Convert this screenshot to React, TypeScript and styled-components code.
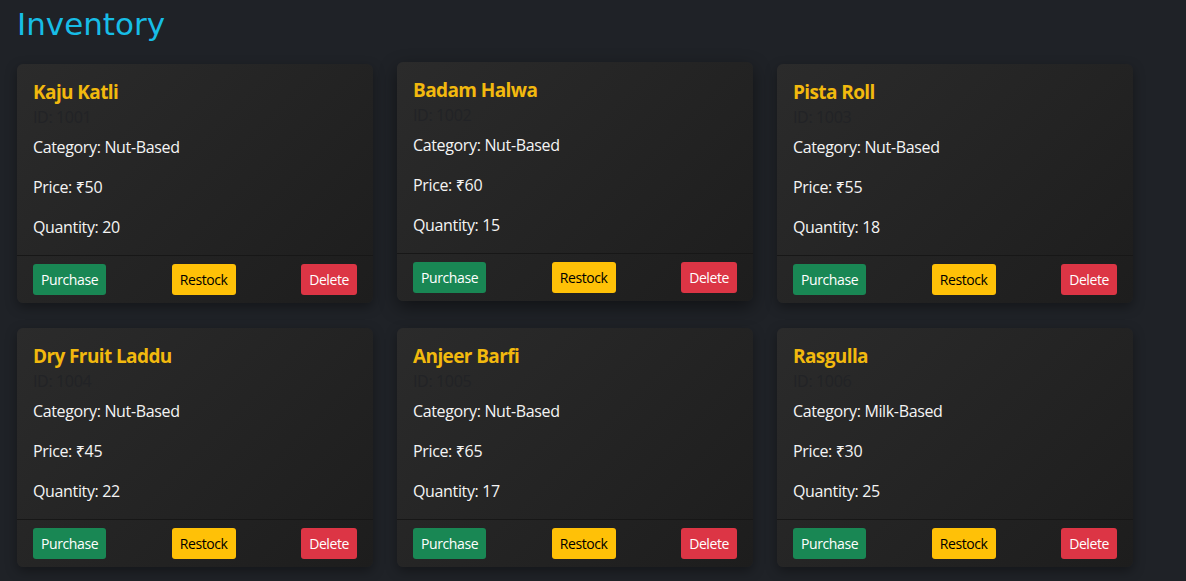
import React from "react";
import styled, { createGlobalStyle } from "styled-components";

const GlobalStyle = createGlobalStyle`
  html, body { margin: 0; padding: 0; }
  body {
    background: #1f2227;
    font-family: "Open Sans", "Noto Sans", sans-serif;
    color: #f1f1f1;
  }
`;

const Page = styled.div`
  padding: 0 53px 16px 17px;
  min-height: 581px;
  box-sizing: border-box;
`;

const Heading = styled.h2`
  margin: 0 0 20px;
  padding-top: 4px;
  font-family: "Comic Sans MS", "DejaVu Sans", sans-serif;
  font-weight: 400;
  font-size: 31px;
  line-height: 40px;
  color: #17bde6;
`;

const Grid = styled.div`
  display: grid;
  grid-template-columns: repeat(3, 356px);
  column-gap: 24px;
  row-gap: 25px;
`;

const Card = styled.div<{ $raised?: boolean }>`
  display: flex;
  flex-direction: column;
  border-radius: 6px;
  background: linear-gradient(135deg, #2b2b2b 0%, #1d1d1d 100%);
  box-shadow: ${(p) =>
    p.$raised ? "0 6px 18px rgba(0,0,0,0.45)" : "0 4px 12px rgba(0,0,0,0.35)"};
  transform: ${(p) => (p.$raised ? "translateY(-2px)" : "none")};
  overflow: hidden;
`;

const Body = styled.div`
  padding: 16px;
`;

const Title = styled.h5`
  margin: 0 0 8px;
  font-size: 19px;
  line-height: 24px;
  font-weight: 700;
  letter-spacing: -0.6px;
  color: #f2b90e;
`;

const Subtitle = styled.h6`
  margin: -4px 0 8px;
  font-size: 16px;
  line-height: 19.2px;
  font-weight: 500;
  letter-spacing: -0.35px;
  color: #222326;
`;

const Line = styled.p`
  margin: 0 0 16px;
  font-size: 16px;
  line-height: 24px;
  letter-spacing: -0.35px;
  color: #f4f4f4;
  &:last-child { margin-bottom: 0; }
`;

const Footer = styled.div`
  display: flex;
  justify-content: space-between;
  align-items: center;
  padding: 8px 16px;
  border-top: 1px solid #171717;
`;

const variants = {
  success: { bg: "#198754", fg: "#ffffff" },
  warning: { bg: "#ffc107", fg: "#000000" },
  danger: { bg: "#dc3545", fg: "#ffffff" },
};

const Button = styled.button<{ $variant: keyof typeof variants }>`
  border: none;
  border-radius: 3px;
  padding: 0 8px;
  height: 31px;
  font-family: inherit;
  font-size: 14px;
  line-height: 31px;
  letter-spacing: -0.4px;
  background: ${(p) => variants[p.$variant].bg};
  color: ${(p) => variants[p.$variant].fg};
  cursor: pointer;
`;

const items = [
  { id: 1001, name: "Kaju Katli", category: "Nut-Based", price: 50, qty: 20 },
  { id: 1002, name: "Badam Halwa", category: "Nut-Based", price: 60, qty: 15, raised: true },
  { id: 1003, name: "Pista Roll", category: "Nut-Based", price: 55, qty: 18 },
  { id: 1004, name: "Dry Fruit Laddu", category: "Nut-Based", price: 45, qty: 22 },
  { id: 1005, name: "Anjeer Barfi", category: "Nut-Based", price: 65, qty: 17 },
  { id: 1006, name: "Rasgulla", category: "Milk-Based", price: 30, qty: 25 },
];

export default function App() {
  return (
    <>
      <GlobalStyle />
      <Page>
        <Heading>Inventory</Heading>
        <Grid>
          {items.map((it) => (
            <Card key={it.id} $raised={it.raised}>
              <Body>
                <Title>{it.name}</Title>
                <Subtitle>ID: {it.id}</Subtitle>
                <Line>Category: {it.category}</Line>
                <Line>Price: ₹{it.price}</Line>
                <Line>Quantity: {it.qty}</Line>
              </Body>
              <Footer>
                <Button $variant="success">Purchase</Button>
                <Button $variant="warning">Restock</Button>
                <Button $variant="danger">Delete</Button>
              </Footer>
            </Card>
          ))}
        </Grid>
      </Page>
    </>
  );
}
